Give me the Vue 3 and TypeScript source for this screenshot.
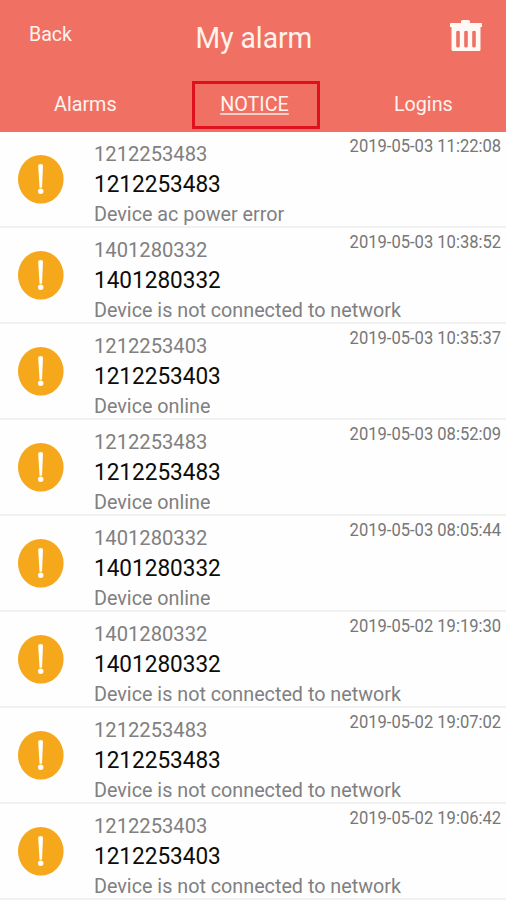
<script setup lang="ts">
interface Notice {
  device: string
  message: string
  time: string
}

const notices: Notice[] = [
  { device: '1212253483', message: 'Device ac power error', time: '2019-05-03 11:22:08' },
  { device: '1401280332', message: 'Device is not connected to network', time: '2019-05-03 10:38:52' },
  { device: '1212253403', message: 'Device online', time: '2019-05-03 10:35:37' },
  { device: '1212253483', message: 'Device online', time: '2019-05-03 08:52:09' },
  { device: '1401280332', message: 'Device online', time: '2019-05-03 08:05:44' },
  { device: '1401280332', message: 'Device is not connected to network', time: '2019-05-02 19:19:30' },
  { device: '1212253483', message: 'Device is not connected to network', time: '2019-05-02 19:07:02' },
  { device: '1212253403', message: 'Device is not connected to network', time: '2019-05-02 19:06:42' },
]
</script>

<template>
  <div class="screen">
    <header class="header">
      <div class="bar">
        <span class="back">Back</span>
        <span class="title">My alarm</span>
        <svg class="trash" width="34" height="34" viewBox="0 0 34 34">
          <path
            fill="#fff8f5"
            fill-rule="evenodd"
            d="M12 5V3.500Q12 2 13.500 2H19.500Q21 2 21 3.500V5H32Q33 5 33 6V9H1V6Q1 5 2 5ZM2.500 9H31.500V31.500Q31.500 33 30 33H4Q2.500 33 2.500 31.500ZM7.200 14V28Q7.200 29.500 9 29.500Q10.800 29.500 10.800 28V14Q10.800 12.700 9 12.700Q7.200 12.700 7.200 14ZM15.200 14V28Q15.200 29.500 17 29.500Q18.800 29.500 18.800 28V14Q18.800 12.700 17 12.700Q15.200 12.700 15.200 14ZM23.200 14V28Q23.200 29.500 25 29.500Q26.800 29.500 26.800 28V14Q26.800 12.700 25 12.700Q23.200 12.700 23.200 14Z"
          />
        </svg>
      </div>
      <nav class="tabs">
        <span class="tab"><span class="label">Alarms</span></span>
        <span class="tab active"><span class="label">NOTICE</span></span>
        <span class="tab"><span class="label">Logins</span></span>
      </nav>
    </header>
    <main class="list">
      <article v-for="(n, i) in notices" :key="i" class="row">
        <svg class="alert" width="46" height="50" viewBox="0 0 46 50">
          <ellipse cx="22.800" cy="25.300" rx="22.800" ry="24.300" fill="#f5a81c" />
          <path d="M20.200 11.500Q20.200 10 22.600 10Q25 10 25 11.500L24 33.700H21.500Z" fill="#fff" />
          <circle cx="22.700" cy="37.200" r="2.700" fill="#fff" />
        </svg>
        <div class="info">
          <div class="name">{{ n.device }}</div>
          <div class="serial">{{ n.device }}</div>
          <div class="message">{{ n.message }}</div>
        </div>
        <time class="time">{{ n.time }}</time>
      </article>
    </main>
  </div>
</template>

<style>
body {
  margin: 0;
  background: #fefefe;
}
</style>

<style scoped>
.screen {
  width: 506px;
  height: 900px;
  overflow: hidden;
  background: #fefefe;
  font-family: Roboto, "Liberation Sans", sans-serif;
}
.header {
  box-sizing: border-box;
  height: 132px;
  background: #f07163;
  color: #fff3ee;
}
.bar {
  display: grid;
  grid-template-columns: 153px 1fr 153px;
  height: 81px;
}
.back {
  padding: 22px 0 0 29px;
  font-size: 21px;
  line-height: 24px;
  transform: scaleX(0.93);
  transform-origin: 29px 0;
}
.title {
  padding: 20px 0 0 2px;
  text-align: center;
  font-size: 30px;
  line-height: 35px;
  transform: scaleX(0.94);
}
.trash {
  margin: 18px 0 0 96px;
}
.tabs {
  display: grid;
  grid-template-columns: 170px 1fr 166px;
  align-items: start;
  justify-items: center;
  height: 51px;
}
.tab {
  box-sizing: border-box;
  height: 48px;
  font-size: 21px;
  line-height: 46px;
}
.active {
  width: 128px;
  margin-left: 1px;
  padding-right: 2px;
  border: 3px solid #e0111e;
  line-height: 40px;
  text-align: center;
}
.label {
  display: inline-block;
  transform: scaleX(0.94);
}
.active .label {
  text-decoration: underline #f3d0cb;
  text-decoration-thickness: 2px;
  text-underline-offset: 2px;
}
.row {
  box-sizing: border-box;
  display: grid;
  grid-template-columns: 94px 230px 182px;
  height: 96px;
  border-bottom: 2px solid #f1f1f1;
}
.alert {
  margin: 22px 0 0 18px;
}
.info {
  display: flex;
  flex-direction: column;
  align-items: flex-start;
  padding-top: 7px;
  color: #808080;
  white-space: nowrap;
}
.name,
.serial,
.message {
  line-height: 30px;
  transform: scaleX(0.94);
  transform-origin: left;
}
.name {
  font-size: 21px;
  transform: scaleX(0.96);
}
.serial {
  color: #0c0c0c;
  font-size: 24px;
}
.message {
  font-size: 21px;
}
.time {
  justify-self: end;
  padding: 2px 5px 0 0;
  color: #777;
  font-size: 18px;
  line-height: 23px;
  white-space: nowrap;
  transform: scaleX(0.92);
  transform-origin: right;
}
</style>
